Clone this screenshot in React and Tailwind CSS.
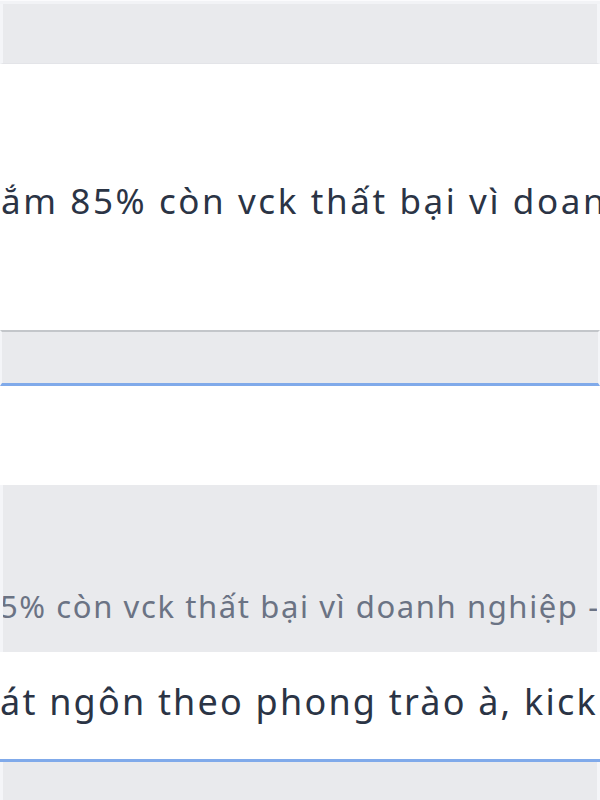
export default function App() {
  const font = { fontFamily: '"Noto Sans", "Open Sans", sans-serif' };
  return (
    <div className="w-[600px] h-[800px] overflow-hidden bg-white flex flex-col" style={font}>
      <div className="h-[4px] bg-[#f2f3f6] border-t border-[#fbfbfd]" />
      <div className="h-[60px] bg-[#e9eaed] border-x-[3px] border-[#f4f5f8] border-b border-b-[#e3e4e8]" />
      <div className="h-[266px] flex items-center overflow-hidden">
        <div className="whitespace-nowrap text-[35px] tracking-[2.6px] leading-none text-[#2b3445] ml-[1px] mt-[6px]">ắm 85% còn vck thất bại vì doanh nghiệp</div>
      </div>
      <div className="h-[56px] bg-[#e9eaed] border-t-2 border-[#c3c6ca] border-b-[3px] border-b-[#80aaea] border-x-[2px] border-x-[#f4f5f8]" />
      <div className="h-[99px] bg-white" />
      <div className="h-[167px] bg-[#e9eaed] border-x-[3px] border-[#f4f5f8] flex flex-col justify-end overflow-hidden">
        <div className="whitespace-nowrap text-[31px] tracking-[1.6px] leading-none text-[#6b7384] pb-[30px] -ml-[3px]">5% còn vck thất bại vì doanh nghiệp -</div>
      </div>
      <div className="h-[110px] bg-white flex items-center overflow-hidden border-b-[3px] border-[#80aaea]">
        <div className="whitespace-nowrap text-[36px] tracking-[2.2px] leading-none text-[#2b3445] mb-[8px]">át ngôn theo phong trào à, kick</div>
      </div>
      <div className="flex-1 bg-[#e9eaed] border-x-[3px] border-[#f4f5f8]" />
    </div>
  );
}
